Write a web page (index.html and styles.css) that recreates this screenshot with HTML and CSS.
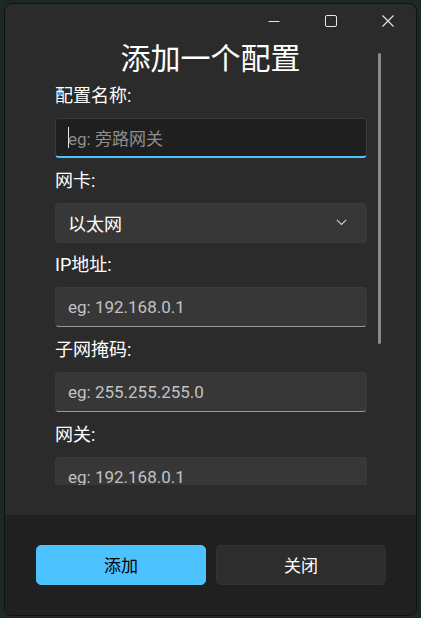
FILE: index.html
```html
<!DOCTYPE html>
<html lang="zh-CN">
<head>
<meta charset="utf-8">
<link rel="stylesheet" href="styles.css">
</head>
<body>
<div class="window">
  <div class="titlebar">
    <button class="tb-btn" aria-label="minimize">
      <svg width="12" height="12" viewBox="0 0 12 12"><path d="M0.5 6.5h11" stroke="#e6e6e6" stroke-width="1" fill="none"/></svg>
    </button>
    <button class="tb-btn" aria-label="maximize">
      <svg width="12" height="12" viewBox="0 0 12 12"><rect x="0.5" y="0.5" width="11" height="11" rx="1.5" stroke="#e6e6e6" stroke-width="1" fill="none"/></svg>
    </button>
    <button class="tb-btn" aria-label="close">
      <svg width="12" height="12" viewBox="0 0 12 12"><path d="M0.5 0.5l11 11M11.5 0.5l-11 11" stroke="#e6e6e6" stroke-width="1.1" fill="none"/></svg>
    </button>
  </div>
  <div class="content">
    <h1 class="heading">添加一个配置</h1>
    <div class="scroll">
      <div class="form">
        <div class="group">
          <label class="label">配置名称:</label>
          <div class="field focused"><span class="caret"></span><span class="ph">eg: 旁路网关</span></div>
        </div>
        <div class="group">
          <label class="label">网卡:</label>
          <div class="field select"><span class="value">以太网</span>
            <svg class="chev" width="11" height="7" viewBox="0 0 11 7"><path d="M0.8 0.8l4.7 4.7 4.7-4.7" stroke="#d0d0d0" stroke-width="1.1" fill="none"/></svg>
          </div>
        </div>
        <div class="group">
          <label class="label">IP地址:</label>
          <div class="field"><span class="ph">eg: 192.168.0.1</span></div>
        </div>
        <div class="group">
          <label class="label">子网掩码:</label>
          <div class="field"><span class="ph">eg: 255.255.255.0</span></div>
        </div>
        <div class="group">
          <label class="label">网关:</label>
          <div class="field"><span class="ph">eg: 192.168.0.1</span></div>
        </div>
      </div>
    </div>
    <div class="scrollbar"></div>
  </div>
  <div class="spacer"></div>
  <div class="footer">
    <button class="btn primary">添加</button>
    <button class="btn secondary">关闭</button>
  </div>
</div>
</body>
</html>
```

FILE: styles.css
```css
* { box-sizing: border-box; }
html, body { margin: 0; padding: 0; }
body {
  width: 421px;
  height: 618px;
  background: #1c2828;
  font-family: Roboto, "Noto Sans CJK SC", sans-serif;
  overflow: hidden;
}
.window {
  margin: 3px 4px 0 4px;
  width: 413px;
  height: 613px;
  background: #2b2b2b;
  border: 1px solid #111;
  border-radius: 8px;
  overflow: hidden;
  display: flex;
  flex-direction: column;
}
.titlebar {
  height: 32px;
  display: flex;
  justify-content: flex-end;
  flex: none;
}
.tb-btn {
  width: 57px;
  height: 32px;
  border: none;
  background: transparent;
  display: flex;
  align-items: center;
  justify-content: center;
  padding: 1px 0 0 0;
}
.tb-btn svg { display: block; }
.content {
  position: relative;
  height: 449px;
  flex: none;
  display: flex;
  flex-direction: column;
}
.heading {
  margin: 0 0 8px 0;
  height: 40px;
  font-size: 30px;
  line-height: 40px;
  font-weight: 400;
  color: #fff;
  text-align: center;
  font-family: "Noto Sans CJK SC", sans-serif;
  flex: none;
}
.scroll {
  flex: 1;
  overflow: hidden;
  padding: 0 49px 0 50px;
}
.form {
  display: flex;
  flex-direction: column;
  gap: 10.7px;
}
.group {
  display: flex;
  flex-direction: column;
}
.label {
  font-size: 18px;
  line-height: 24px;
  color: #fff;
  margin-bottom: 10px;
}
.field {
  height: 40px;
  flex: none;
  border-radius: 4px;
  background: #373737;
  border: 1px solid #3a3a3a;
  border-bottom: 1px solid #9a9a9a;
  display: flex;
  align-items: center;
  padding-left: 12px;
  position: relative;
  font-size: 17px;
}
.field .ph { color: #c2c2c2; }
.field.focused {
  background: #1f1f1f;
  border: 1px solid #393939;
  border-bottom: 2px solid #4cc2ff;
}
.field.focused .ph { color: #8e8e8e; }
.caret {
  position: absolute;
  left: 12px;
  top: 8px;
  width: 1px;
  height: 21px;
  background: #e8e8e8;
}
.field.select {
  border-bottom: 1px solid #3a3a3a;
  justify-content: space-between;
  padding-left: 12px;
  padding-right: 19px;
}
.select .value { color: #fff; font-size: 18px; }
.chev { display: block; }
.scrollbar {
  position: absolute;
  left: 373px;
  top: 17px;
  width: 3px;
  height: 291px;
  border-radius: 2px;
  background: #8a8a8a;
}
.spacer {
  height: 30px;
  flex: none;
}
.footer {
  flex: 1;
  background: #202020;
  display: flex;
  gap: 10px;
  padding: 30px 0 0 31px;
}
.btn {
  width: 170px;
  height: 40px;
  border-radius: 5px;
  font-family: "Noto Sans CJK SC", sans-serif;
  font-size: 17px;
  line-height: 24px;
}
.btn.primary {
  background: #4cc2ff;
  border: 1px solid #4cc2ff;
  color: #000;
}
.btn.secondary {
  background: #2d2d2d;
  border: 1px solid #323232;
  color: #fff;
}
```
